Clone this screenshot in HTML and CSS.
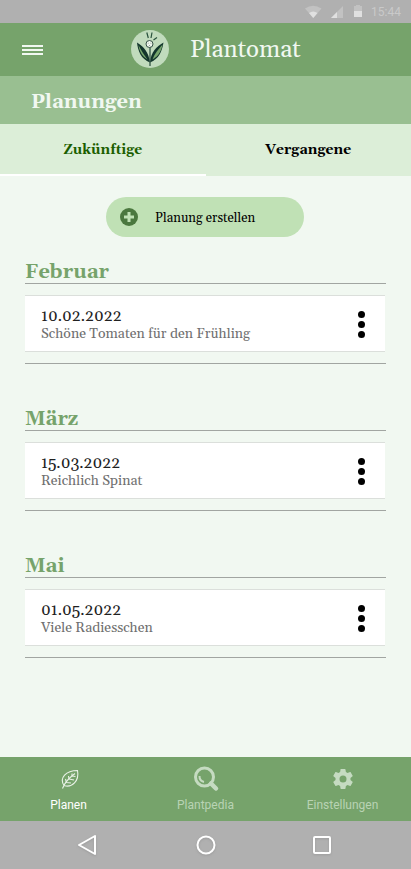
FILE: index.html
```html
<!DOCTYPE html>
<html lang="de">
<head>
<meta charset="utf-8">
<meta name="viewport" content="width=device-width, initial-scale=1">
<title>Plantomat</title>
<link rel="stylesheet" href="styles.css">
</head>
<body>
<div class="status">
  <svg class="status-icons" width="60" height="16" viewBox="0 0 60 16" aria-hidden="true">
    <path d="M0 4.500Q8 -1 16.500 4.500L8.250 14Z" fill="#c2c2c2"/>
    <path d="M4 9Q8.250 6 12.500 9L8.250 14Z" fill="#e0e0e0"/>
    <path d="M38 2V14H26Z" fill="#c2c2c2"/>
    <path d="M32 8V14H26Z" fill="#e0e0e0"/>
    <path d="M49 2H51V1H55V2H57V13H49Z" fill="#c2c2c2"/>
    <path d="M49 7H57V13H49Z" fill="#e0e0e0"/>
  </svg>
  <span>15:44</span>
</div>
<header class="appbar">
  <button class="menu" type="button" aria-label="Menü"><span></span><span></span><span></span></button>
  <svg class="logo" width="38" height="38" viewBox="0 0 38 38" aria-hidden="true">
    <circle cx="19" cy="19" r="19" fill="#c1dbbd"/>
    <path d="M19 32.500C10 29 7 21 6 12.500C13 17 17.500 22 19 32.500Z" fill="#12352c"/>
    <path d="M16.500 29.500C10.500 26 8 20 7.500 15C10 20 13 25 16.500 29.500Z" fill="#76a56c"/>
    <path d="M19 32.500C28 29 31 21 32.500 12.500C25 17 20 22 19 32.500Z" fill="#12352c"/>
    <path d="M21.500 29.500C28 26 30.500 20 31.500 14.500C27.500 19 23.500 23.500 21.500 29.500Z" fill="#76a56c"/>
    <path d="M19 17V36" stroke="#284b3c" stroke-width="1.200"/>
    <path d="M15.800 2.500L17.300 8M21 2.500L20 8M22.500 10L26 7.500" stroke="#28513c" stroke-width="1.200"/>
    <circle cx="18.500" cy="14" r="3.500" fill="#eef5ec" stroke="#233f35" stroke-width="0.900"/>
    <path d="M16.800 13.300h.8M19.500 13.300h.8M18 15.500h1" stroke="#829389" stroke-width=".8"/>
  </svg>
  <h1>Plantomat</h1>
</header>
<h2 class="page-title">Planungen</h2>
<nav class="tabs">
  <a class="active" href="#kommend" aria-current="page">Zukünftige</a>
  <a href="#vergangen">Vergangene</a>
</nav>
<main>
  <button class="create" type="button">
    <svg width="18" height="18" viewBox="0 0 18 18" aria-hidden="true">
      <circle cx="9" cy="9" r="9" fill="#4b783f"/>
      <path d="M9 4V14M4 9H14" stroke="#c0e1b5" stroke-width="3"/>
    </svg>
    <span>Planung erstellen</span>
  </button>
  <section class="month">
    <h3>Februar</h3>
    <article class="card">
      <div><p class="date">10.02.2022</p><p class="name">Schöne Tomaten für den Frühling</p></div>
      <button class="more" type="button" aria-label="Optionen"><span></span><span></span><span></span></button>
    </article>
  </section>
  <section class="month">
    <h3>März</h3>
    <article class="card">
      <div><p class="date">15.03.2022</p><p class="name">Reichlich Spinat</p></div>
      <button class="more" type="button" aria-label="Optionen"><span></span><span></span><span></span></button>
    </article>
  </section>
  <section class="month">
    <h3>Mai</h3>
    <article class="card">
      <div><p class="date">01.05.2022</p><p class="name">Viele Radiesschen</p></div>
      <button class="more" type="button" aria-label="Optionen"><span></span><span></span><span></span></button>
    </article>
  </section>
</main>
<nav class="bottom">
  <a class="active" href="#planen">
    <svg width="28" height="28" viewBox="0 0 28 28" fill="none" stroke="#e9f2e7" aria-hidden="true">
      <path d="M9 20.500C4 13 11 5.500 22.500 5.500C24.500 16 17 23 9 20.500M7.500 23.500C9 19 14 13 20 8.500" stroke-width="1.100"/>
      <path d="M11.500 17.500L10.500 14M14 14L13.500 11M17 11V8.500M11.500 17.500L16 18M14 14L19 15M17 11L20.500 11.500" stroke-width="1.100"/>
    </svg>
    <span>Planen</span>
  </a>
  <a href="#plantpedia">
    <svg width="28" height="28" viewBox="0 0 28 28" fill="none" stroke="#c5dbc1" aria-hidden="true">
      <circle cx="12.500" cy="12" r="9" stroke-width="3"/>
      <path d="M7.500 11A6 6 0 0 0 12 17" stroke-width="2"/>
      <path d="M19 18.500L24 23.500" stroke-width="4.500" stroke-linecap="round"/>
    </svg>
    <span>Plantpedia</span>
  </a>
  <a href="#einstellungen">
    <svg width="28" height="28" viewBox="0 0 28 28" fill="#c5dbc1" aria-hidden="true">
      <path transform="translate(2 2)" d="M19.430 12.980c.04-.32.070-.64.070-.98s-.03-.66-.07-.98l2.110-1.650c.19-.15.24-.42.120-.64l-2-3.460c-.12-.22-.39-.3-.61-.22l-2.490 1c-.52-.4-1.080-.73-1.690-.98l-.38-2.650A.488.488 0 0 0 14 2h-4c-.25 0-.46.180-.49.420l-.38 2.650c-.61.250-1.170.59-1.690.98l-2.490-1c-.23-.09-.49 0-.61.220l-2 3.460c-.13.220-.07.490.120.640l2.110 1.650c-.04.320-.07.650-.07.980s.03.660.070.980l-2.110 1.650c-.19.150-.24.420-.12.640l2 3.460c.12.220.39.300.61.220l2.490-1c.52.400 1.080.730 1.690.980l.38 2.650c.03.240.24.420.49.420h4c.25 0 .46-.18.490-.42l.38-2.650c.61-.25 1.170-.59 1.690-.98l2.490 1c.23.090.49 0 .61-.22l2-3.460c.12-.22.070-.49-.12-.64l-2.110-1.650zM12 15.500a3.500 3.500 0 1 1 0-7 3.500 3.500 0 0 1 0 7z"/>
    </svg>
    <span>Einstellungen</span>
  </a>
</nav>
<div class="system">
  <button type="button" aria-label="Zurück"><svg width="24" height="24" viewBox="0 0 24 24"><path d="M18 3V21L2 12Z"/></svg></button>
  <button type="button" aria-label="Startbildschirm"><svg width="24" height="24" viewBox="0 0 24 24"><circle cx="12" cy="12" r="8.500"/></svg></button>
  <button type="button" aria-label="Übersicht"><svg width="24" height="24" viewBox="0 0 24 24"><rect x="4" y="4" width="16" height="16" rx="1"/></svg></button>
</div>
</body>
</html>
```
FILE: styles.css
```css
* { box-sizing: border-box; margin: 0; padding: 0; }
body {
  min-height: 100vh;
  display: flex;
  flex-direction: column;
  background: #f1f8f1;
  color: #000;
  font-family: Georgia, Gelasio, "Liberation Serif", serif;
}
button { font: inherit; color: inherit; background: none; border: 0; cursor: pointer; }
a { color: inherit; text-decoration: none; }
svg { display: block; flex: none; }
.status {
  display: flex;
  justify-content: flex-end;
  align-items: center;
  gap: 6px;
  height: 23px;
  padding-right: 10px;
  background: #b0b0b0;
  color: #c9c9c9;
  font: 12px/14px Roboto, sans-serif;
}
.appbar {
  display: flex;
  align-items: center;
  height: 53px;
  padding: 0 22px;
  background: #76a36b;
  color: #f1f8f1;
}
.menu { display: grid; gap: 2px; width: 21px; }
.menu span { height: 2px; background: #f1f8f1; }
.logo { margin: 0 21px 2px 88px; }
.appbar h1 { font-size: 24px; line-height: 32px; font-weight: 400; }
.page-title {
  height: 48px;
  padding: 0 31px;
  background: #99bf91;
  color: #f1f8f1;
  font-size: 20px;
  line-height: 52px;
}
.tabs {
  display: grid;
  grid-template-columns: 1fr 1fr;
  background: #dceed8;
  font-size: 14px;
  line-height: 48px;
  font-weight: 700;
  text-align: center;
}
.tabs a { padding-top: 2px; border-bottom: 2px solid transparent; }
.tabs .active { color: #1b5e00; border-color: #fff; }
main { flex: 1; padding: 21px 26px 20px 25px; }
.create {
  display: flex;
  align-items: center;
  gap: 17px;
  width: 198px;
  height: 40px;
  margin: 0 auto 24px;
  padding: 0 14px;
  border-radius: 20px;
  background: #c0e1b5;
  font-size: 13px;
  line-height: 20px;
}
.create span { padding-top: 2px; }
.month {
  margin: 0 -1px 44px 0;
  padding-bottom: 11px;
  border-bottom: 1px solid #a1a5a1;
}
.month h3 {
  margin-bottom: 11px;
  border-bottom: 1px solid #a1a5a1;
  color: #76a36b;
  font-size: 20px;
  line-height: 22px;
}
.card {
  display: flex;
  justify-content: space-between;
  align-items: center;
  margin-right: 1px;
  padding: 11px 16px 9px;
  border: solid #dbdfdb;
  border-width: 1px 0;
  background: #fff;
}
.date { color: #212121; font-size: 16px; line-height: 19px; }
.name { color: #707070; font-size: 14px; line-height: 16px; }
.more { display: grid; justify-items: center; gap: 3px; width: 16px; }
.more span { width: 7px; height: 7px; border-radius: 50%; background: #000; }
.bottom {
  display: grid;
  grid-template-columns: repeat(3, 1fr);
  height: 64px;
  background: #76a36b;
  color: #b9d3b4;
  font: 12px/16px Roboto, sans-serif;
}
.bottom a { display: flex; flex-direction: column; align-items: center; gap: 4px; padding-top: 8px; }
.bottom .active { color: #fff; }
.system {
  display: flex;
  justify-content: space-between;
  align-items: center;
  height: 48px;
  padding: 0 77px;
  background: #b0b0b0;
}
.system svg { fill: none; stroke: #fff; stroke-width: 2; stroke-linejoin: round; filter: drop-shadow(0 1px 1px #8888); }
```
